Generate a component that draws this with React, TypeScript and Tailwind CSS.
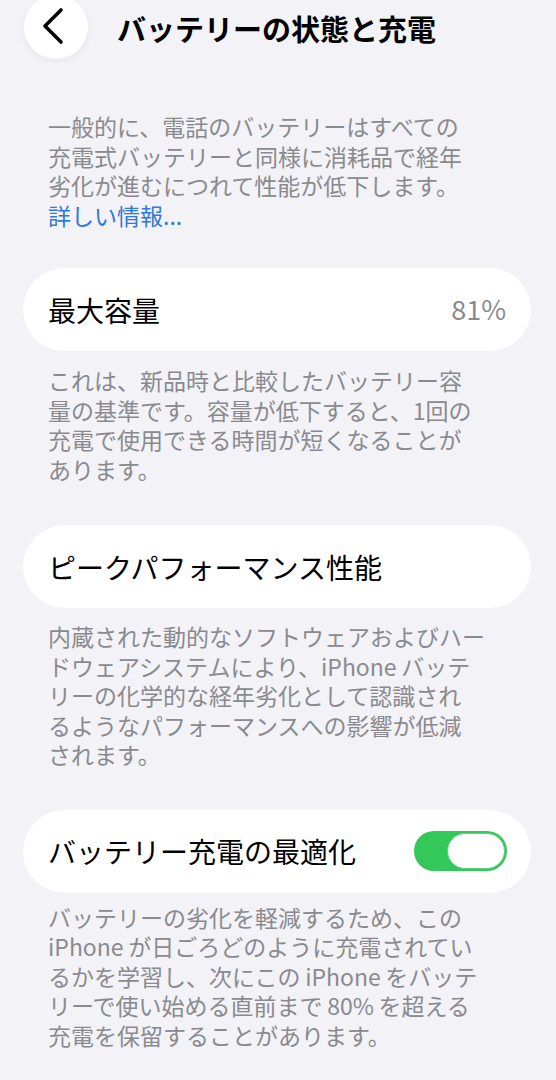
const font = { fontFamily: '"Noto Sans CJK JP", "Noto Sans", sans-serif' };

// explicit line breaks, so the wrap matches the device
const Note = ({ lines, className = "" }: { lines: React.ReactNode[]; className?: string }) => (
  <p className={`pl-[48px] text-[23px] leading-[29.5px] text-[#8a8a8e] whitespace-nowrap ${className}`}>
    {lines.map((l, i) => (
      <span key={i} className="block">
        {l}
      </span>
    ))}
  </p>
);

const App = () => {
  return (
    <div className="min-h-[1080px] w-full bg-[#f2f2f7] overflow-hidden" style={font}>
      <div className="flex items-center h-[58px] pl-[24px]">
        <button className="-mt-[4px] flex h-[64px] w-[64px] shrink-0 items-center justify-center rounded-full bg-white shadow-[0_2px_8px_rgba(0,0,0,0.05)]">
          <svg width="26" height="40" viewBox="0 0 26 40" className="-ml-[6px] mt-[-2px]">
            <polyline
              points="21,4 5,20 21,36"
              fill="none"
              stroke="#000"
              strokeWidth="3.6"
              strokeLinecap="round"
              strokeLinejoin="round"
            />
          </svg>
        </button>
        <h1 className="ml-[29px] text-[29px] font-bold text-black">バッテリーの状態と充電</h1>
      </div>

      <Note
        className="mt-[54px]"
        lines={[
          "一般的に、電話のバッテリーはすべての",
          "充電式バッテリーと同様に消耗品で経年",
          "劣化が進むにつれて性能が低下します。",
          <span className="text-[#2f7ad8]">詳しい情報...</span>,
        ]}
      />

      <div className="ml-[23px] mr-[25px] mt-[38px] flex h-[83px] items-center justify-between rounded-full bg-white px-[25px]">
        <span className="text-[28px] text-black">最大容量</span>
        <span className="text-[27px] text-[#8a8a8e]">81%</span>
      </div>
      <Note
        className="mt-[15px]"
        lines={[
          "これは、新品時と比較したバッテリー容",
          "量の基準です。容量が低下すると、1回の",
          "充電で使用できる時間が短くなることが",
          "あります。",
        ]}
      />

      <div className="ml-[23px] mr-[25px] mt-[41px] flex h-[83px] items-center rounded-full bg-white px-[25px]">
        <span className="text-[28px] text-black">ピークパフォーマンス性能</span>
      </div>
      <Note
        className="mt-[14px]"
        lines={[
          "内蔵された動的なソフトウェアおよびハー",
          "ドウェアシステムにより、iPhone\u2009バッテ",
          "リーの化学的な経年劣化として認識され",
          "るようなパフォーマンスへの影響が低減",
          "されます。",
        ]}
      />

      <div className="ml-[23px] mr-[25px] mt-[40px] flex h-[83px] items-center justify-between rounded-full bg-white pl-[25px] pr-[24px]">
        <span className="text-[28px] text-black">バッテリー充電の最適化</span>
        <div className="flex h-[40px] w-[93px] items-center justify-end rounded-full bg-[#34c759] p-[2px]">
          <div className="h-[36px] w-[58px] rounded-full border border-[#5fd37a] bg-white" />
        </div>
      </div>
      <Note
        className="mt-[10px]"
        lines={[
          "バッテリーの劣化を軽減するため、この",
          "iPhone\u2009が日ごろどのように充電されてい",
          "るかを学習し、次にこの\u2009iPhone\u2009をバッテ",
          "リーで使い始める直前まで\u200980%\u2009を超える",
          "充電を保留することがあります。",
        ]}
      />
    </div>
  );
};

export default App;
